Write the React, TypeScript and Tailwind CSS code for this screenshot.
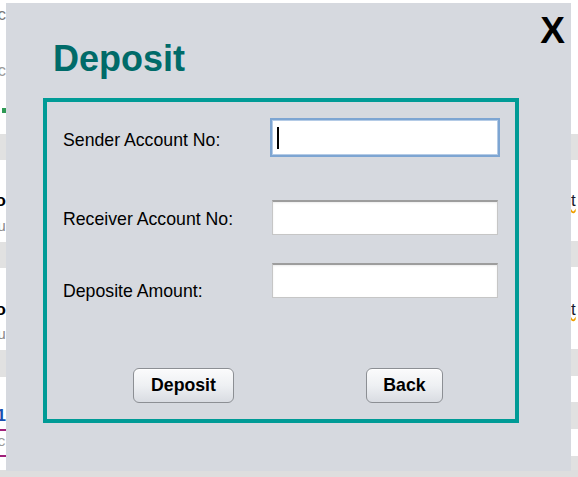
import React from 'react';

const font = { fontFamily: '"Liberation Sans", Arial, sans-serif' };

function Band({ h, gray, children, className = '' }: { h: number; gray?: boolean; children?: React.ReactNode; className?: string }) {
  return (
    <div
      className={`flex items-center overflow-hidden whitespace-nowrap ${gray ? 'bg-[#e1e1e1]' : 'bg-white'} ${className}`}
      style={{ height: h }}
    >
      {children}
    </div>
  );
}

function LeftStrip() {
  return (
    <div className="w-[6px] flex flex-col overflow-hidden text-[17px]" style={font}>
      <div className="h-[134px] bg-white flex flex-col items-end overflow-hidden">
        <span className="mt-[4px] text-[#777] leading-[22px]">c</span>
        <span className="mt-[34px] text-[#999] leading-[22px]">c</span>
        <span className="mt-[26px] w-[4px] h-[5px] bg-[#2f9a55]" />
      </div>
      <Band h={26} gray />
      <Band h={27} />
      <Band h={28} className="justify-end">
        <span className="font-bold text-black">o</span>
      </Band>
      <Band h={27} className="justify-end">
        <span className="text-[#8a8a8a] text-[15px]" style={{ fontFamily: '"Liberation Mono", monospace' }}>u</span>
      </Band>
      <Band h={26} gray />
      <Band h={29} />
      <Band h={26} className="justify-end">
        <span className="font-bold text-black">o</span>
      </Band>
      <Band h={27} className="justify-end">
        <span className="text-[#8a8a8a] text-[15px]" style={{ fontFamily: '"Liberation Mono", monospace' }}>u</span>
      </Band>
      <Band h={27} gray />
      <Band h={26} />
      <Band h={28} className="justify-end border-b-2 border-[#a0207a]">
        <span className="text-[#1a4fb0] font-bold">1</span>
      </Band>
      <Band h={26} className="justify-end border-b-2 border-[#a0207a]">
        <span className="text-[#999] text-[15px]" style={{ fontFamily: '"Liberation Mono", monospace' }}>c</span>
      </Band>
      <Band h={13} />
    </div>
  );
}

function RightStrip() {
  return (
    <div className="w-[7px] flex flex-col overflow-hidden text-[17px]" style={font}>
      <Band h={134} />
      <Band h={26} gray />
      <Band h={28} />
      <Band h={27}>
        <span className="text-[#1a1a2e] underline decoration-wavy decoration-[#f0a000]">t</span>
      </Band>
      <Band h={27} />
      <Band h={26} gray />
      <Band h={29} />
      <Band h={26}>
        <span className="text-[#1a1a2e] underline decoration-wavy decoration-[#f0a000]">t</span>
      </Band>
      <Band h={27} />
      <Band h={27} gray />
      <Band h={26} />
      <Band h={27} gray />
      <Band h={27} />
      <Band h={14} gray />
    </div>
  );
}

function Field({ focused }: { focused?: boolean }) {
  return (
    <div
      className={`relative w-[226px] h-[35px] bg-white ${
        focused
          ? 'border border-[#b4cbe6] ring-2 ring-[#7da5d2]'
          : 'border border-[#c6c6c6] border-t-[#9d9d9d] border-t-2 shadow-[inset_0_1px_2px_rgba(0,0,0,0.08)]'
      }`}
    >
      {focused && <span className="absolute left-[4px] top-[6px] w-[2px] h-[22px] bg-black" />}
    </div>
  );
}

function Row({ label, labelTop, top, focused }: { label: string; labelTop: number; top: number; focused?: boolean }) {
  return (
    <div className="flex items-start h-[35px]" style={{ marginTop: top }}>
      <div className="w-[225px] pl-[16px] text-[17.7px] leading-[20px] text-black" style={{ marginTop: labelTop }}>
        {label}
      </div>
      <Field focused={focused} />
    </div>
  );
}

function Button({ children, w }: { children: React.ReactNode; w: number }) {
  return (
    <button
      className="h-[35px] rounded-[6px] border border-[#8c8f94] bg-gradient-to-b from-[#fbfbfc] via-[#eef0f3] to-[#d9dce2] text-[17.7px] font-bold text-black shadow-[inset_0_1px_0_#ffffff]"
      style={{ width: w }}
    >
      {children}
    </button>
  );
}

export default function App() {
  return (
    <div className="relative w-[578px] h-[477px] overflow-hidden bg-white" style={font}>
      <div className="flex h-[470px]">
        <LeftStrip />
        <div className="w-[565px] bg-white" />
        <RightStrip />
      </div>
      <div className="h-[7px] bg-[#dedede]" />

      <div className="absolute left-[6px] top-[3px] w-[565px] h-[468px] bg-[#d6d9df] flex flex-col pl-[37px]">
        <div className="h-[95px] flex justify-between items-start pr-[6px]">
          <h1 className="mt-[38px] ml-[10px] text-[36px] leading-none font-bold text-[#006b69]">Deposit</h1>
          <span className="mt-[9px] text-[37px] leading-none font-bold text-black">X</span>
        </div>

        <div className="w-[476px] h-[325px] border-4 border-[#009b96] flex flex-col">
          <Row label="Sender Account No:" labelTop={10} top={18} focused />
          <Row label="Receiver Account No:" labelTop={9} top={45} />
          <Row label="Deposite Amount:" labelTop={18} top={28} />
          <div className="flex mt-[70px]">
            <div className="ml-[86px]">
              <Button w={101}>Deposit</Button>
            </div>
            <div className="ml-[132px]">
              <Button w={77}>Back</Button>
            </div>
          </div>
        </div>
      </div>
    </div>
  );
}
